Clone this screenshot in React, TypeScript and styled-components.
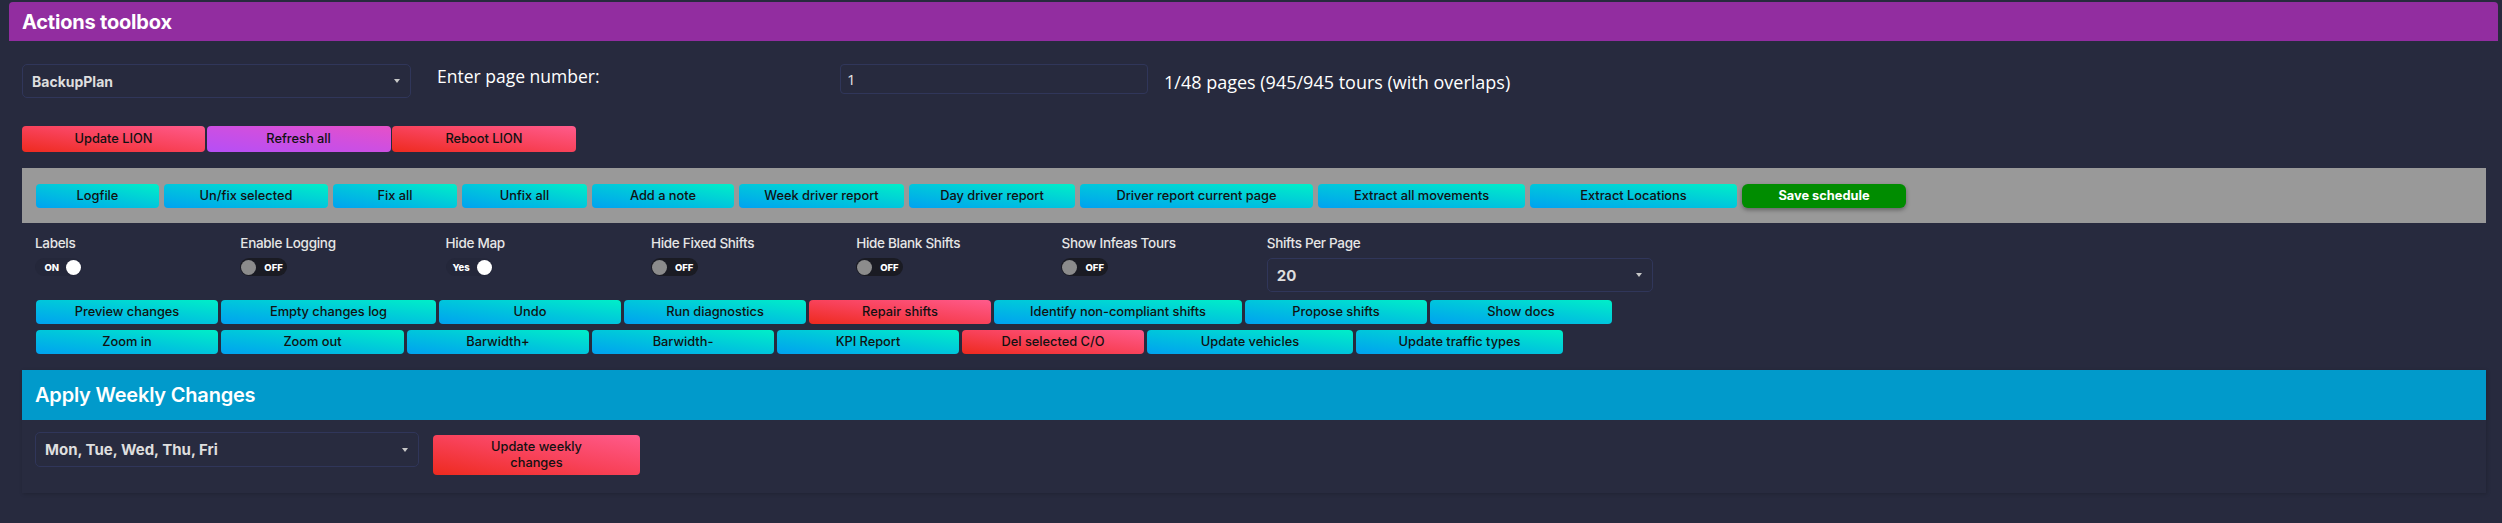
import React from "react";
import styled, { createGlobalStyle, css } from "styled-components";

const GlobalStyle = createGlobalStyle`
  html, body {
    margin: 0;
    padding: 0;
    background: #272a3e;
  }
  body {
    font-family: Inter, "Noto Sans", sans-serif;
    color: #fff;
  }
  * { box-sizing: border-box; }
`;

type Variant = "cyan" | "red" | "purple" | "green";

const gradients: Record<Variant, ReturnType<typeof css>> = {
  cyan: css`
    background: linear-gradient(to top right, #00a2f0 0%, #00c6dc 50%, #00efc8 100%);
    color: #111;
  `,
  red: css`
    background: linear-gradient(to top right, #ee2a1e 0%, #f8425a 50%, #ff5b8c 100%);
    color: #111;
  `,
  purple: css`
    background: linear-gradient(to top right, #b54ff6 0%, #cf4fe0 55%, #e650c8 100%);
    color: #111;
  `,
  green: css`
    background: #008c00;
    color: #fff;
    font-weight: 700;
    border-radius: 6px;
    box-shadow: 0 2px 4px rgba(0, 0, 0, 0.35);
  `,
};

const Page = styled.div`
  padding: 2px 4px 0 9px;
  min-height: 523px;
`;

const Card = styled.section<{ $inset?: boolean }>`
  ${(p) =>
    p.$inset &&
    css`
      margin: 0 12px 0 13px;
      background: #282b3f;
      box-shadow: 1px 1px 4px rgba(0, 0, 0, 0.18);
    `}
`;

const CardHeader = styled.header<{ $tone: "purple" | "blue" }>`
  display: flex;
  align-items: center;
  padding: 0 13px;
  height: ${(p) => (p.$tone === "purple" ? "39px" : "50px")};
  background: ${(p) => (p.$tone === "purple" ? "#922da0" : "#019acb")};
  border-radius: ${(p) => (p.$tone === "purple" ? "4px 4px 0 0" : "0")};
`;

const Title = styled.h2<{ $weight?: number }>`
  margin: 0;
  font-size: 20px;
  font-weight: ${(p) => p.$weight ?? 700};
  color: #fff;
  letter-spacing: -0.2px;
`;

const CardBody = styled.div`
  padding: 23px 12px 16px 13px;
`;

const TopRow = styled.div`
  display: flex;
  align-items: flex-start;
`;

const Select = styled.div<{ $w: number; $h: number; $size?: number }>`
  flex: none;
  width: ${(p) => p.$w}px;
  height: ${(p) => p.$h}px;
  border: 1px solid #30365a;
  border-radius: 5px;
  padding: 0 10px 0 9px;
  display: flex;
  align-items: center;
  justify-content: space-between;
  font-size: ${(p) => p.$size ?? 14}px;
  font-weight: 700;
  color: #dedede;
`;

const Caret = styled.span`
  width: 0;
  height: 0;
  border-left: 3px solid transparent;
  border-right: 3px solid transparent;
  border-top: 4px solid #c8c8c8;
`;

const PageLabel = styled.label`
  flex: none;
  margin-left: 26px;
  width: 403px;
  font-family: "Open Sans", "Noto Sans", sans-serif;
  font-size: 17.5px;
  line-height: 24px;
  color: #fff;
`;

const PageInput = styled.div`
  flex: none;
  width: 308px;
  height: 30px;
  border: 1px solid #30365a;
  border-radius: 4px;
  padding-left: 6px;
  display: flex;
  align-items: center;
  font-family: "Open Sans", "Noto Sans", sans-serif;
  font-size: 15px;
  color: #e6e6e6;
`;

const PageInfo = styled.span`
  margin-left: 16px;
  font-family: "Open Sans", "Noto Sans", sans-serif;
  font-size: 18px;
  line-height: 36px;
  color: #fff;
`;

const ButtonRow = styled.div<{ $gap: number; $top?: number }>`
  display: flex;
  gap: ${(p) => p.$gap}px;
  margin-top: ${(p) => p.$top ?? 0}px;
`;

const Btn = styled.button<{ $variant: Variant; $w: number; $h: number }>`
  width: ${(p) => p.$w}px;
  height: ${(p) => p.$h}px;
  border: none;
  border-radius: 4px;
  padding: 0;
  font-family: Inter, "Noto Sans", sans-serif;
  font-size: 12.8px;
  font-weight: 500;
  line-height: 16px;
  flex: none;
  ${(p) => gradients[p.$variant]}
`;

const Toolbar = styled.div`
  margin-top: 16px;
  height: 55px;
  padding: 16px 14px 15px;
  background: #999999;
  display: flex;
  gap: 5px;
`;

const Settings = styled.div`
  margin-top: 11px;
  padding-left: 13px;
  display: grid;
  grid-template-columns: repeat(6, 205.3px) auto;
`;

const Setting = styled.div`
  display: flex;
  flex-direction: column;
  align-items: flex-start;
`;

const SettingLabel = styled.span`
  font-size: 13.5px;
  font-weight: 500;
  line-height: 18px;
  color: #e6e6e6;
  letter-spacing: -0.3px;
  margin-bottom: 6px;
`;

const Switch = styled.div<{ $on: boolean }>`
  height: 18px;
  width: 47px;
  border-radius: 9px;
  display: flex;
  align-items: center;
  flex-direction: ${(p) => (p.$on ? "row" : "row-reverse")};
  justify-content: flex-end;
  gap: ${(p) => (p.$on ? "7px" : "8px")};
  padding: ${(p) => (p.$on ? "0 1px 0 9px" : "0 6px 0 1px")};
  background: ${(p) => (p.$on ? "#24273a" : "#1a1b23")};
`;

const SwitchText = styled.span`
  font-size: 9.5px;
  font-weight: 800;
  color: #fff;
`;

const Knob = styled.span<{ $on: boolean }>`
  width: 15px;
  height: 15px;
  border-radius: 50%;
  flex: none;
  background: ${(p) => (p.$on ? "#ffffff" : "#8c8c8c")};
`;

const Actions = styled.div`
  margin-top: 8px;
  padding-left: 14px;
`;

const WeeklyBody = styled.div`
  display: flex;
  align-items: flex-start;
  padding: 12px 13px 18px;
`;

const WeeklyBtn = styled(Btn)`
  margin-left: 14px;
  margin-top: 3px;
`;

type B = { label: string; w: number; v?: Variant };

const toolbarButtons: B[] = [
  { label: "Logfile", w: 123 },
  { label: "Un/fix selected", w: 164 },
  { label: "Fix all", w: 124 },
  { label: "Unfix all", w: 125 },
  { label: "Add a note", w: 142 },
  { label: "Week driver report", w: 165 },
  { label: "Day driver report", w: 166 },
  { label: "Driver report current page", w: 233 },
  { label: "Extract all movements", w: 207 },
  { label: "Extract Locations", w: 207 },
  { label: "Save schedule", w: 164, v: "green" },
];

const rowA: B[] = [
  { label: "Preview changes", w: 182 },
  { label: "Empty changes log", w: 215 },
  { label: "Undo", w: 182 },
  { label: "Run diagnostics", w: 182 },
  { label: "Repair shifts", w: 182, v: "red" },
  { label: "Identify non-compliant shifts", w: 248 },
  { label: "Propose shifts", w: 182 },
  { label: "Show docs", w: 182 },
];

const rowB: B[] = [
  { label: "Zoom in", w: 182 },
  { label: "Zoom out", w: 183 },
  { label: "Barwidth+", w: 182 },
  { label: "Barwidth-", w: 182 },
  { label: "KPI Report", w: 182 },
  { label: "Del selected C/O", w: 182, v: "red" },
  { label: "Update vehicles", w: 206 },
  { label: "Update traffic types", w: 207 },
];

const toggles: { label: string; on: boolean; text: string }[] = [
  { label: "Labels", on: true, text: "ON" },
  { label: "Enable Logging", on: false, text: "OFF" },
  { label: "Hide Map", on: true, text: "Yes" },
  { label: "Hide Fixed Shifts", on: false, text: "OFF" },
  { label: "Hide Blank Shifts", on: false, text: "OFF" },
  { label: "Show Infeas Tours", on: false, text: "OFF" },
];

export default function App() {
  return (
    <Page>
      <GlobalStyle />
      <Card>
        <CardHeader $tone="purple">
          <Title>Actions toolbox</Title>
        </CardHeader>
        <CardBody>
          <TopRow>
            <Select $w={389} $h={34}>
              <span>BackupPlan</span>
              <Caret />
            </Select>
            <PageLabel>Enter page number:</PageLabel>
            <PageInput>1</PageInput>
            <PageInfo>1/48 pages (945/945 tours (with overlaps)</PageInfo>
          </TopRow>

          <ButtonRow $gap={1.5} $top={26}>
            <Btn $variant="red" $w={183} $h={26}>Update LION</Btn>
            <Btn $variant="purple" $w={184} $h={26}>Refresh all</Btn>
            <Btn $variant="red" $w={184} $h={26}>Reboot LION</Btn>
          </ButtonRow>

          <Toolbar>
            {toolbarButtons.map((b) => (
              <Btn key={b.label} $variant={b.v ?? "cyan"} $w={b.w} $h={24}>
                {b.label}
              </Btn>
            ))}
          </Toolbar>

          <Settings>
            {toggles.map((t) => (
              <Setting key={t.label}>
                <SettingLabel>{t.label}</SettingLabel>
                <Switch $on={t.on}>
                  <SwitchText>{t.text}</SwitchText>
                  <Knob $on={t.on} />
                </Switch>
              </Setting>
            ))}
            <Setting>
              <SettingLabel>Shifts Per Page</SettingLabel>
              <Select $w={386} $h={34} $size={15}>
                <span>20</span>
                <Caret />
              </Select>
            </Setting>
          </Settings>

          <Actions>
            <ButtonRow $gap={3}>
              {rowA.map((b) => (
                <Btn key={b.label} $variant={b.v ?? "cyan"} $w={b.w} $h={24}>
                  {b.label}
                </Btn>
              ))}
            </ButtonRow>
            <ButtonRow $gap={3} $top={6}>
              {rowB.map((b) => (
                <Btn key={b.label} $variant={b.v ?? "cyan"} $w={b.w} $h={24}>
                  {b.label}
                </Btn>
              ))}
            </ButtonRow>
          </Actions>
        </CardBody>
      </Card>

      <Card $inset>
        <CardHeader $tone="blue">
          <Title $weight={600}>Apply Weekly Changes</Title>
        </CardHeader>
        <WeeklyBody>
          <Select $w={384} $h={35} $size={15}>
            <span>Mon, Tue, Wed, Thu, Fri</span>
            <Caret />
          </Select>
          <WeeklyBtn $variant="red" $w={207} $h={40}>
            Update weekly
            <br />
            changes
          </WeeklyBtn>
        </WeeklyBody>
      </Card>
    </Page>
  );
}
